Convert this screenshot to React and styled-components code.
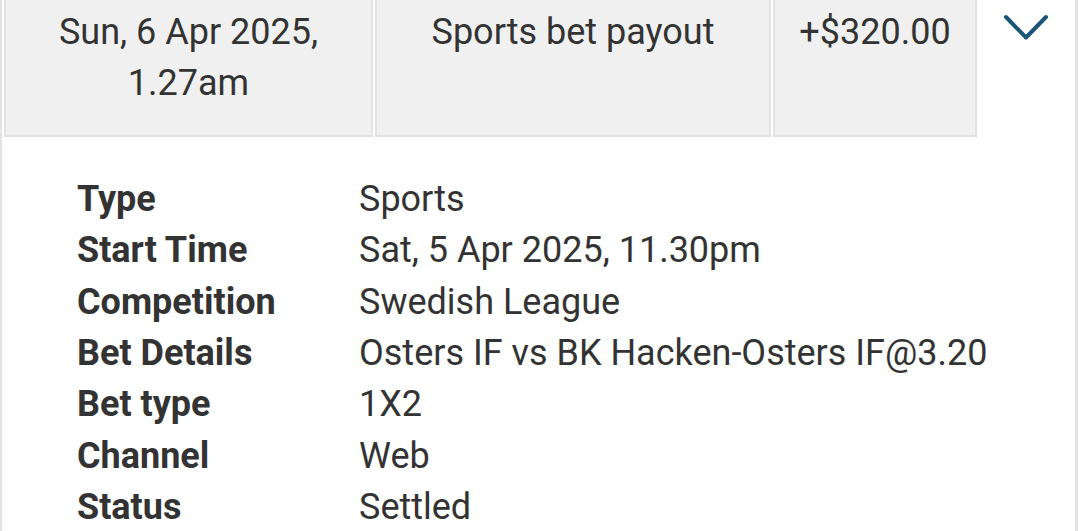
import React from "react";
import styled, { createGlobalStyle } from "styled-components";

const GlobalStyle = createGlobalStyle`
  html, body {
    margin: 0;
    padding: 0;
    background: #fff;
    overflow: hidden;
  }
  body {
    font-family: Roboto, "Liberation Sans", sans-serif;
    color: #333;
  }
`;

const Panel = styled.div`
  width: 1078px;
  height: 531px;
  box-sizing: border-box;
  border-left: 2px solid #e3e3e3;
  border-right: 3px solid #e3e3e3;
  background: #fff;
`;

const HeaderRow = styled.div`
  display: flex;
  gap: 2px;
  padding-left: 2px;
  height: 137px;
`;

const Cell = styled.div`
  box-sizing: border-box;
  width: ${p => p.w}px;
  flex: none;
  background: #f0f0f0;
  border: 2px solid #e2e2e2;
  border-top: 0;
  padding-top: 7px;
  text-align: center;
  font-size: 36px;
  line-height: 51px;
  color: #333;
`;

const ToggleCell = styled.div`
  flex: 1;
  display: flex;
  justify-content: center;
  padding-top: 14px;
  padding-right: 2px;
`;

const Details = styled.div`
  display: grid;
  grid-template-columns: 282px 1fr;
  padding: 37px 0 0 75px;
  font-size: 36px;
  line-height: 51.33px;
`;

const Label = styled.div`
  font-weight: 700;
  color: #333;
`;

const Value = styled.div`
  color: #333;
`;

const Chevron = () => (
  <svg width="46" height="28" viewBox="0 0 46 28" fill="none">
    <polyline
      points="3,3 23,23.5 43,3"
      stroke="#1c5677"
      strokeWidth="4"
      strokeLinecap="round"
      strokeLinejoin="round"
    />
  </svg>
);

const rows = [
  ["Type", "Sports"],
  ["Start Time", "Sat, 5 Apr 2025, 11.30pm"],
  ["Competition", "Swedish League"],
  ["Bet Details", "Osters IF vs BK Hacken-Osters IF@3.20"],
  ["Bet type", "1X2"],
  ["Channel", "Web"],
  ["Status", "Settled"],
];

export default function App() {
  return (
    <>
      <GlobalStyle />
      <Panel>
        <HeaderRow>
          <Cell w={369}>
            Sun, 6 Apr 2025,
            <br />
            1.27am
          </Cell>
          <Cell w={396}>Sports bet payout</Cell>
          <Cell w={204}>+$320.00</Cell>
          <ToggleCell>
            <Chevron />
          </ToggleCell>
        </HeaderRow>
        <Details>
          {rows.map(([k, v]) => (
            <React.Fragment key={k}>
              <Label>{k}</Label>
              <Value>{v}</Value>
            </React.Fragment>
          ))}
        </Details>
      </Panel>
    </>
  );
}
